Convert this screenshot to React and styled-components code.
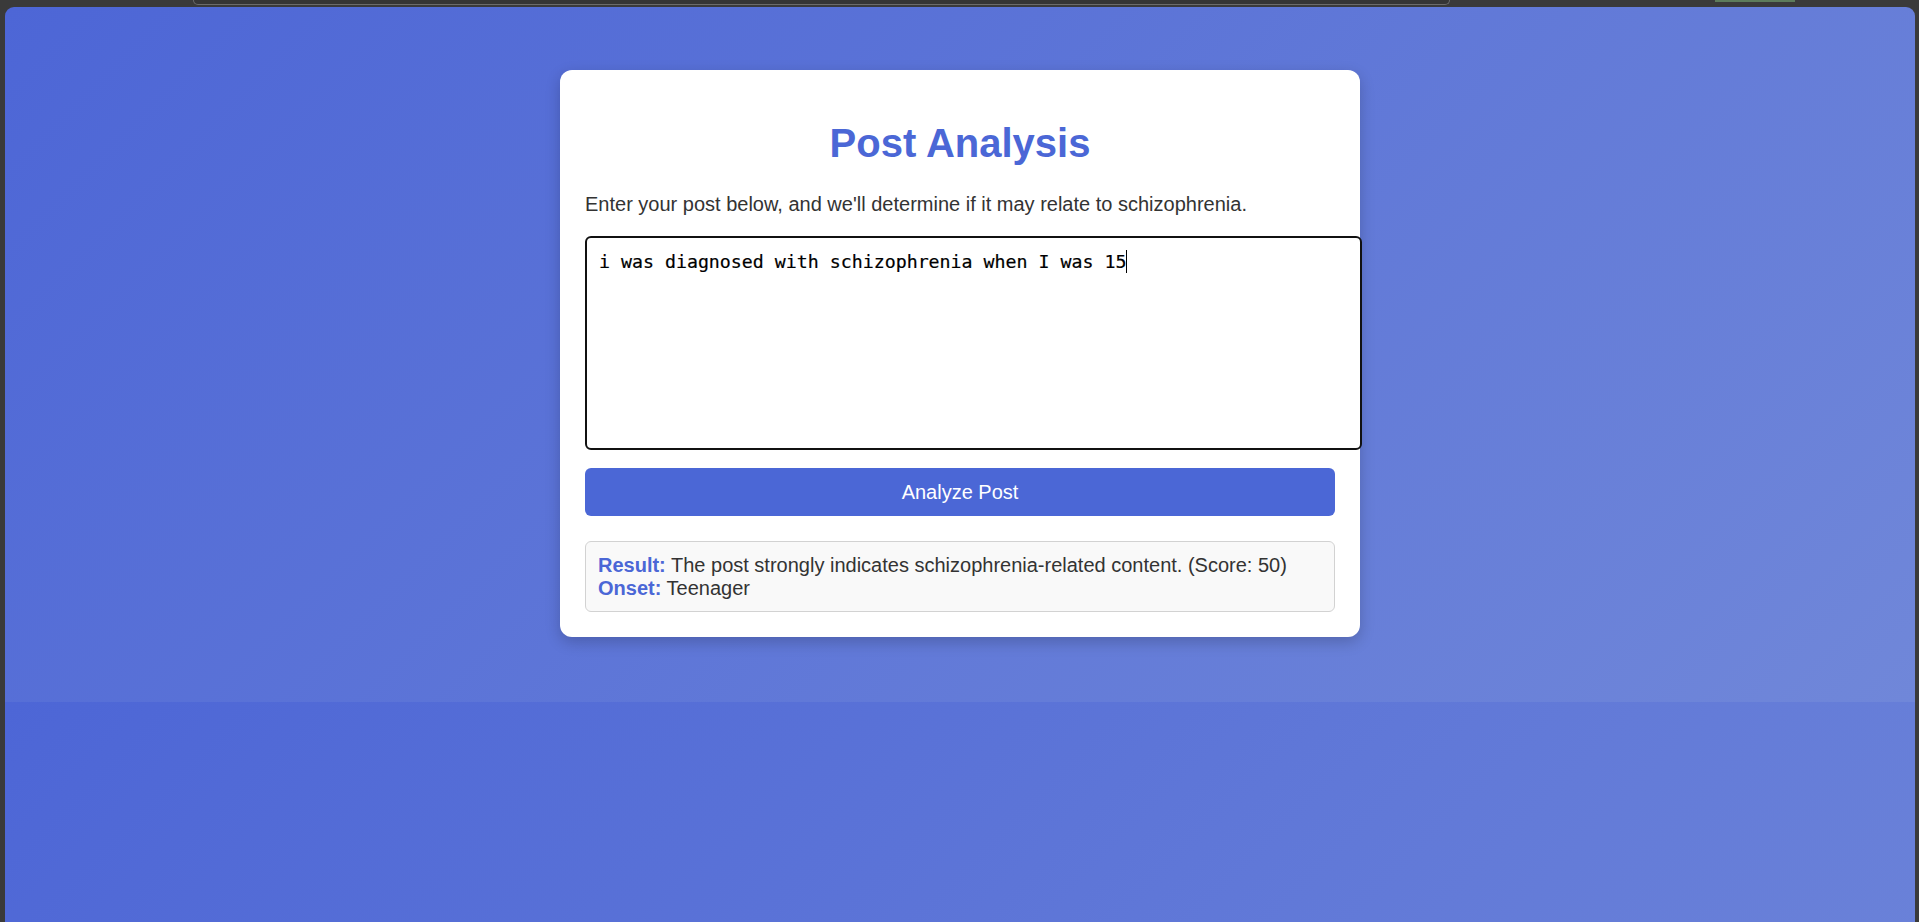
import React from "react";
import styled, { createGlobalStyle } from "styled-components";

const GlobalStyle = createGlobalStyle`
  html, body {
    margin: 0;
    padding: 0;
    background: #3a3a3a;
    height: 100%;
  }
  body {
    font-family: "Liberation Sans", Arial, sans-serif;
    overflow: hidden;
  }
  * { box-sizing: border-box; }
`;

const Screen = styled.div`
  display: flex;
  flex-direction: column;
  height: 922px;
  background: #3a3a3a;
`;

const ChromeBar = styled.div`
  display: flex;
  align-items: flex-start;
  height: 7px;
  padding-left: 193px;
  flex-shrink: 0;
`;

const UrlBox = styled.div`
  width: 1257px;
  height: 5px;
  border: 1px solid #6b6b6b;
  border-top: none;
  border-radius: 0 0 7px 7px;
  background: #353535;
`;

const GreenTab = styled.div`
  margin-left: 265px;
  width: 80px;
  height: 2px;
  background: #5d7b5b;
`;

const Viewport = styled.div`
  flex: 1;
  margin: 0 4px 0 5px;
  border-radius: 9px 9px 0 0;
  background-image: linear-gradient(135deg, #4d66d6 0%, #7087d9 100%);
  background-size: 100% 695px;
  background-repeat: repeat-y;
  display: flex;
  flex-direction: column;
  align-items: center;
  padding-top: 63px;
`;

const Card = styled.div`
  width: 800px;
  background: #ffffff;
  border-radius: 12px;
  padding: 25px;
  box-shadow: 0 5px 15px rgba(0, 0, 0, 0.2);
`;

const Title = styled.h1`
  margin: 25px 0 27px;
  text-align: center;
  font-size: 40px;
  line-height: 46px;
  font-weight: 700;
  color: #4b67d6;
`;

const Lead = styled.p`
  margin: 0 0 20px;
  font-size: 20px;
  line-height: 23px;
  color: #333333;
`;

const InputWrap = styled.div`
  position: relative;
  width: calc(100% + 27px);
`;

const PostInput = styled.textarea`
  display: block;
  width: 100%;
  height: 214px;
  padding: 12px;
  border: 2px solid #111111;
  border-radius: 6px;
  outline: none;
  resize: none;
  font-family: "DejaVu Sans Mono", "Liberation Mono", monospace;
  font-size: 18.25px;
  line-height: 23px;
  color: #000000;
  caret-color: transparent;
  background: #ffffff;
  -webkit-text-stroke: 0.2px #000;
`;

const Caret = styled.span`
  position: absolute;
  left: 541px;
  top: 14px;
  width: 1px;
  height: 23px;
  background: #000000;
  pointer-events: none;
`;

const AnalyzeButton = styled.button`
  display: block;
  width: 100%;
  height: 48px;
  margin-top: 18px;
  border: none;
  border-radius: 6px;
  background: #4b67d6;
  color: #ffffff;
  font-family: "Liberation Sans", Arial, sans-serif;
  font-size: 20px;
  cursor: pointer;
`;

const ResultBox = styled.div`
  margin-top: 25px;
  padding: 12px 12px 11px;
  background: #f9f9f9;
  border: 1px solid #d2d2d2;
  border-radius: 6px;
  font-size: 20px;
  line-height: 23px;
  color: #333333;
`;

const Label = styled.strong`
  font-weight: 700;
  color: #4b67d6;
`;

const value = "i was diagnosed with schizophrenia when I was 15";

export default function App() {
  return (
    <>
      <GlobalStyle />
      <Screen>
        <ChromeBar>
          <UrlBox />
          <GreenTab />
        </ChromeBar>
        <Viewport>
          <Card>
            <Title>Post Analysis</Title>
            <Lead>
              Enter your post below, and we'll determine if it may relate to schizophrenia.
            </Lead>
            <InputWrap>
              <PostInput defaultValue={value} spellCheck={false} />
              <Caret />
            </InputWrap>
            <AnalyzeButton>Analyze Post</AnalyzeButton>
            <ResultBox>
              <Label>Result:</Label> The post strongly indicates schizophrenia-related content. (Score: 50)
              <br />
              <Label>Onset:</Label> Teenager
            </ResultBox>
          </Card>
        </Viewport>
      </Screen>
    </>
  );
}
